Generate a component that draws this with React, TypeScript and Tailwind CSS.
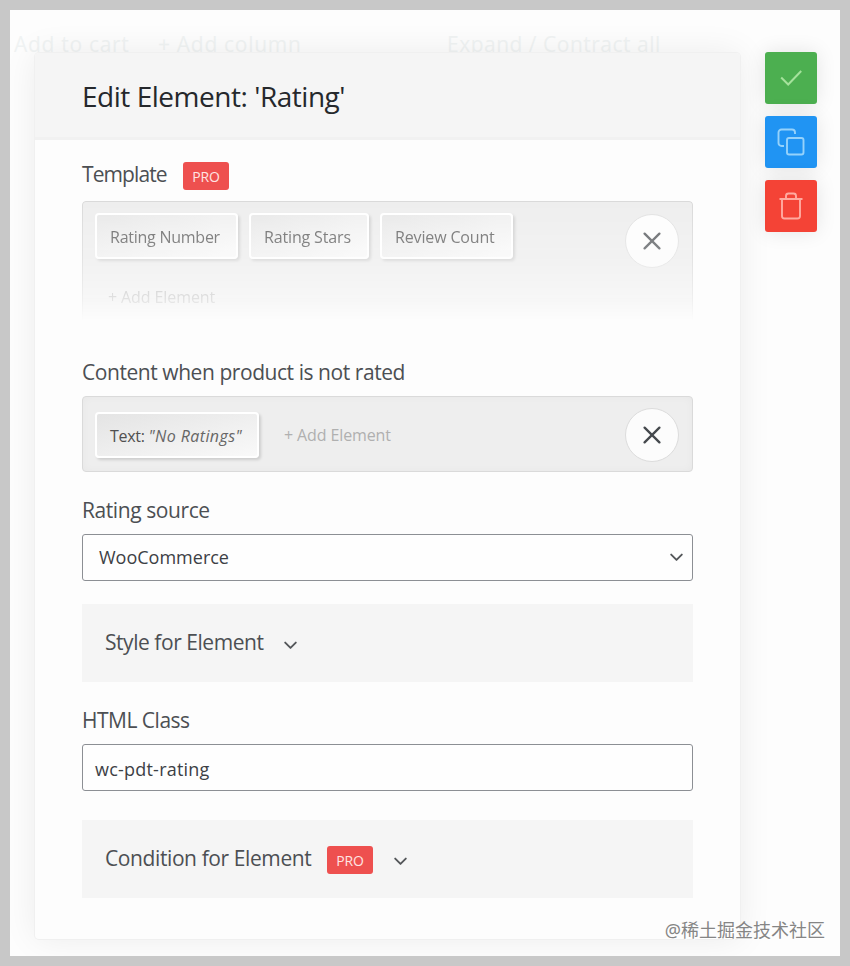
import type { ReactNode } from "react";

function ProBadge() {
  return (
    <span className="flex h-7 w-[46px] items-center justify-center rounded-[3px] bg-[#ee504f] pt-px text-[14px] tracking-[-0.1px] text-[#ffe4e2]">
      PRO
    </span>
  );
}

function Chip({ className, children }: { className: string; children: ReactNode }) {
  return (
    <div
      className={`flex h-[46px] items-center whitespace-nowrap rounded-[4px] border-2 border-white bg-linear-to-br from-[#e4e4e4] to-[#f9f9f9] pt-px pl-[13px] text-[16px] text-[#505050] shadow-[2px_2px_3px_rgba(0,0,0,0.14)] ${className}`}
    >
      {children}
    </div>
  );
}

function RemoveButton() {
  return (
    <button className="flex size-[54px] items-center justify-center rounded-full border border-[#dcdcdc] bg-[#fcfcfc]" aria-label="Remove">
      <svg width="18" height="18" viewBox="0 0 18 18" fill="none" stroke="#45494d" strokeWidth="2.3" strokeLinecap="round">
        <path d="M1.6 1.6 16.4 16.4M16.4 1.6 1.6 16.4" />
      </svg>
    </button>
  );
}

function Chevron() {
  return (
    <svg width="13" height="9" viewBox="0 0 13 9" fill="none" stroke="#54575a" strokeWidth="1.9" strokeLinecap="round" strokeLinejoin="round">
      <path d="M1.2 1.6 6.5 6.9 11.8 1.6" />
    </svg>
  );
}

function Label({ className = "", children }: { className?: string; children: ReactNode }) {
  return <h3 className={`text-[21px] leading-7 whitespace-nowrap text-[#4c4f53] ${className}`}>{children}</h3>;
}

function Actions() {
  return (
    <aside className="mt-[42px] ml-[25px] flex flex-col gap-3">
      <button className="flex size-[52px] items-center justify-center rounded-[3px] bg-[#4caf50] shadow-[0_0_20px_rgba(0,0,0,0.1)]" aria-label="Save">
        <svg width="30" height="30" viewBox="0 0 30 30" fill="none" stroke="#a5e29c" strokeWidth="2">
          <path d="M5.2 14.5 12.2 21.5 25.2 8" />
        </svg>
      </button>
      <button className="flex size-[52px] items-center justify-center rounded-[3px] bg-[#2094f3] shadow-[0_0_20px_rgba(0,0,0,0.1)]" aria-label="Duplicate">
        <svg width="28" height="28" viewBox="0 0 28 28" fill="none" stroke="#95d2fb" strokeWidth="1.9">
          <rect x="10" y="10" width="16.5" height="16.5" rx="2" />
          <path d="M7 18H4.5a3 3 0 0 1-3-3V4.5a3 3 0 0 1 3-3H15a3 3 0 0 1 3 3V6" />
        </svg>
      </button>
      <button className="flex size-[52px] items-center justify-center rounded-[3px] bg-[#f44336] shadow-[0_0_20px_rgba(0,0,0,0.1)]" aria-label="Delete">
        <svg width="26" height="28" viewBox="0 0 26 28" fill="none" stroke="#ffaaa0" strokeWidth="1.9">
          <path d="M1.5 7h23M4 7v17a2.5 2.5 0 0 0 2.5 2.5h13A2.5 2.5 0 0 0 22 24V7M8 7V4a2.5 2.5 0 0 1 2.5-2.5h5A2.5 2.5 0 0 1 18 4v3" />
        </svg>
      </button>
    </aside>
  );
}

export default function App() {
  return (
    <div className="relative flex h-[966px] w-[850px] items-start overflow-hidden border-10 border-[#c8c8c8] bg-[#fdfdfd] font-['Open_Sans','Noto_Sans',sans-serif]">
      {/* toolbar of the page behind, faded out under the dialog */}
      <div className="absolute top-[18px] left-0 flex h-8 w-[730px] items-start pl-1 text-[21px] leading-8 whitespace-nowrap text-[#f0f3f3]">
        <span className="w-[144px] tracking-[0.7px]">Add to cart</span>
        <span className="w-[289px] tracking-[0.7px]">+ Add column</span>
        <span className="tracking-[0.5px]">Expand / Contract all</span>
      </div>

      <section className="relative ml-[25px] mt-[43px] h-[886px] w-[705px] rounded-[4px] bg-[#fdfdfd] shadow-[0_0_0_1px_#f0f0f0,0_0_34px_rgba(0,0,0,0.075)]">
        <header className="flex h-[87px] items-center rounded-t-[4px] border-b-3 border-[#f1f1f1] bg-[#f5f5f5] pl-[47px]">
          <h2 className="pt-px text-[28px] leading-9 tracking-[-0.47px] whitespace-nowrap text-[#25282c]">Edit Element: 'Rating'</h2>
        </header>

        <div className="flex flex-col px-[47px]">
          <div className="mt-5 flex h-[41px] items-start">
            <Label className="w-[85px] tracking-[-0.9px]">Template</Label>
            <div className="ml-4 pt-[2px]"><ProBadge /></div>
          </div>
          <div className="flex h-[120px] items-start justify-between rounded-t-[4px] border border-b-0 border-[#d4d4d4] bg-[#ebebeb] pt-[11px] pr-[13px] pl-3 [mask-image:linear-gradient(to_bottom,rgba(0,0,0,0.85),rgba(0,0,0,0.65)_45%,rgba(0,0,0,0.38)_78%,transparent)]">
            <div>
              <div className="flex gap-[11px]">
                <Chip className="w-[143px] tracking-[-0.25px]">Rating Number</Chip>
                <Chip className="w-[120px] tracking-[-0.15px]">Rating Stars</Chip>
                <Chip className="w-[133px] tracking-[-0.15px]">Review Count</Chip>
              </div>
              <p className="mt-[26px] ml-[13px] text-[16px] leading-6 tracking-[-0.1px] text-[#a8a8a8]">+ Add Element</p>
            </div>
            <div className="pt-px"><RemoveButton /></div>
          </div>

          <div className="mt-[37px] mb-[10px]"><Label className="tracking-[-0.44px]">Content when product is not rated</Label></div>
          <div className="flex h-[76px] items-center rounded-[4px] border border-[#dadada] bg-[#eee] pr-[13px] pl-3 shadow-[inset_0_0_8px_rgba(0,0,0,0.03)]">
            <div className="pt-[2px]">
              <Chip className="w-[164px]">
                <span className="tracking-[-0.3px]">Text: <i className="tracking-[0.42px] text-[#666]">"No Ratings"</i></span>
              </Chip>
            </div>
            <span className="ml-[25px] pt-px text-[16px] tracking-[-0.12px] text-[#b0b0b0]">+ Add Element</span>
            <div className="ml-auto pt-0.5"><RemoveButton /></div>
          </div>

          <div className="mt-6 mb-[10px]"><Label className="tracking-[-0.42px]">Rating source</Label></div>
          <div className="flex h-[47px] items-center justify-between rounded-[3px] border border-[#8c8f94] bg-[#fefefe] pr-[9px] pl-4 text-[18px] text-[#3c4045]">
            WooCommerce
            <Chevron />
          </div>

          <div className="mt-[23px] flex h-[78px] items-center bg-[#f5f5f5] pb-0.5 pl-[23px]">
            <Label className="w-[159px] tracking-[-0.45px]">Style for Element</Label>
            <div className="ml-5 pt-1.5"><Chevron /></div>
          </div>

          <div className="mt-6 mb-[10px]"><Label className="tracking-[-0.5px]">HTML Class</Label></div>
          <div className="flex h-[47px] items-center rounded-[3px] border border-[#8c8f94] bg-[#fefefe] pt-1 pl-3 text-[18px] tracking-[0.22px] text-[#3c4045]">
            wc-pdt-rating
          </div>

          <div className="mt-[29px] flex h-[78px] items-center bg-[#f5f5f5] pb-0.5 pl-[23px]">
            <Label className="w-[206px] tracking-[-0.4px]">Condition for Element</Label>
            <div className="ml-4 pt-[4px]"><ProBadge /></div>
            <div className="ml-[21px] pt-1.5"><Chevron /></div>
          </div>
        </div>
      </section>

      <Actions />

      <span className="absolute right-[15px] bottom-[14px] font-['Noto_Sans','Noto_Sans_CJK_SC',sans-serif] text-[18px] leading-6 whitespace-nowrap text-[#858585] [text-shadow:1px_1px_0_#fff]">
        @稀土掘金技术社区
      </span>
    </div>
  );
}
